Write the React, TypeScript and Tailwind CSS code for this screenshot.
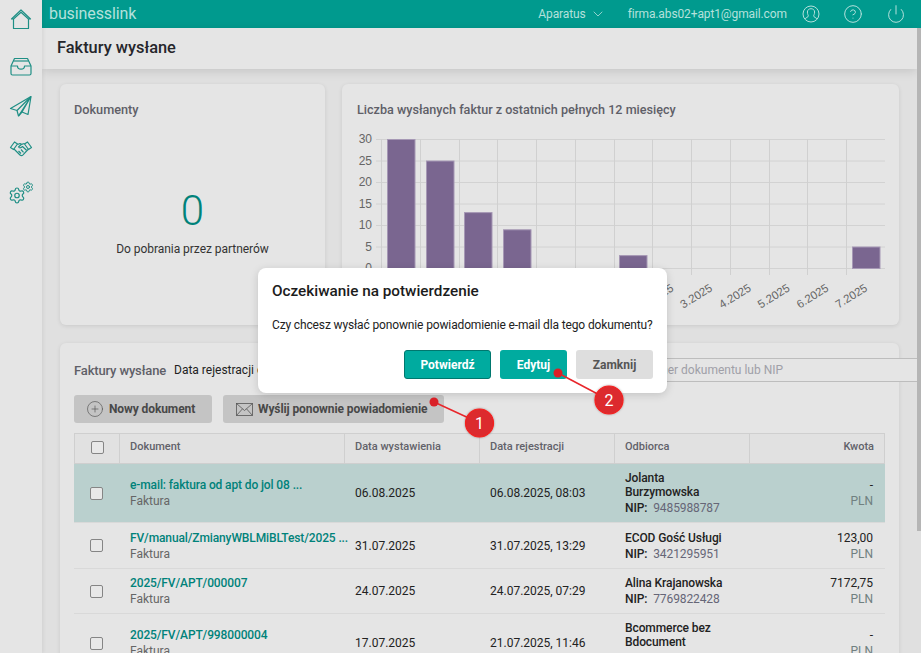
import { ChevronDown, CirclePlus, CircleQuestionMark, Power, Settings } from "lucide-react";

const months = ["7.2024", "8.2024", "9.2024", "10.2024", "11.2024", "12.2024", "1.2025", "2.2025", "3.2025", "4.2025", "5.2025", "6.2025", "7.2025"];
const values = [30, 25, 13, 9, 0, 0, 3, 0, 0, 0, 0, 0, 5];

const rows = [
  { doc: "e-mail: faktura od apt do jol 08 ...", issued: "06.08.2025", registered: "06.08.2025, 08:03", name: ["Jolanta", "Burzymowska"], nip: "9485988787", amount: "-", height: "h-[59px]", active: true },
  { doc: "FV/manual/ZmianyWBLMiBLTest/2025 ...", issued: "31.07.2025", registered: "31.07.2025, 13:29", name: ["ECOD Gość Usługi"], nip: "3421295951", amount: "123,00", height: "h-[46px]", active: false },
  { doc: "2025/FV/APT/000007", issued: "24.07.2025", registered: "24.07.2025, 07:29", name: ["Alina Krajanowska"], nip: "7769822428", amount: "7172,75", height: "h-[45px]", active: false },
  { doc: "2025/FV/APT/998000004", issued: "17.07.2025", registered: "21.07.2025, 11:46", name: ["Bcommerce bez", "Bdocument"], nip: "", amount: "-", height: "h-[59px]", active: false },
];

function Checkbox() {
  return <span className="block w-[13px] h-[13px] ml-[16px] rounded-[2px] border border-[#858585] bg-[#e8e8e8]" />;
}

function SideIcon({ className, children }: { className: string; children: React.ReactNode }) {
  return (
    <svg viewBox="0 0 24 24" fill="none" stroke="#1f8f85" strokeWidth="1.2" strokeLinejoin="round" className={`w-6 h-6 shrink-0 ${className}`}>
      {children}
    </svg>
  );
}

function Sidebar() {
  return (
    <aside className="w-[42px] shrink-0 bg-[#e5e5e5] flex flex-col items-center pt-[7px] z-10 shadow-[1px_0_4px_rgba(0,0,0,0.08)]">
      <SideIcon className="">
        <path d="M12 3 21.5 12H19.5V21.5H4.5V12H2.5Z" />
        <path d="M4.500 12 12 5.200 19.500 12" />
      </SideIcon>
      <SideIcon className="mt-[23px]">
        <path d="M5.500 4.500h13l3.500 7.500v7.500a1.500 1.500 0 0 1-1.500 1.500h-17A1.500 1.500 0 0 1 2 19.500V12z" />
        <path d="M2 12h6.500c0 2 1.300 3.200 3.500 3.200s3.500-1.200 3.500-3.200H22" />
        <path d="M4.500 7h15" />
      </SideIcon>
      <SideIcon className="mt-[16px]">
        <path d="M22 2.500 1.500 14.500 8 16.500 9.500 22 13 18l6 2.500z" />
        <path d="M22 2.500 8 16.500M22 2.500 9.500 22M22 2.500 13 18" />
      </SideIcon>
      <SideIcon className="mt-[19px]">
        <path d="M1.500 10.500 5.500 5l3 2-4 5.500zM22.500 10.500 18.500 5l-3 2 4 5.500z" />
        <path d="M8.500 7.500 11 6.500l1.500.8 3-.8M5 12l6 6c1 .8 2.200.6 3-.2l5-5.300" />
        <path d="M12.500 7.300 9.500 10c.8 1 2 1 3 .2l1-.7 4 3.700M9.500 14l2.500 2.500M12 12.500l2.500 2.800" />
      </SideIcon>
      <svg viewBox="0 0 24 24" className="w-6 h-6 shrink-0 mt-[20px] overflow-visible" fill="none">
        <Settings x="-1" y="5.500" width="18" height="18" strokeWidth={1.6} color="#1f8f85" />
        <Settings x="13" y="0" width="12" height="12" strokeWidth={2} color="#1f8f85" />
      </svg>
    </aside>
  );
}

function TopBar() {
  return (
    <header className="h-[28px] shrink-0 bg-[#009a8e] text-[#b4e1dc] flex items-center pl-[7px] text-[12px]">
      <span className="text-[16px] leading-none tracking-[-0.1px]">businesslink</span>
      <span className="ml-[402px] tracking-[-0.1px]">Aparatus</span>
      <ChevronDown size={16} strokeWidth={1.2} className="ml-[4px]" />
      <span className="ml-[22px] tracking-[-0.12px]">firma.abs02+apt1@gmail.com</span>
      <svg viewBox="0 0 18 18" fill="none" stroke="currentColor" strokeWidth="1" className="w-[18px] h-[18px] ml-[15px]">
        <circle cx="9" cy="9" r="8" />
        <path d="M6.400 11c-.2-1-1-2-1-4 0-2 1.600-3.300 3.600-3.300S12.600 5 12.600 7c0 2-.8 3-1 4 0 1 2.800 1.800 3.500 3M6.400 11c0 1-2.800 1.800-3.500 3" />
      </svg>
      <CircleQuestionMark size={20} strokeWidth={1.2} className="ml-[23px]" />
      <Power size={20} strokeWidth={1.2} className="ml-[23px]" />
    </header>
  );
}

function Chart() {
  const left = 381;
  const step = 38.77;
  const bottom = 268;
  const unit = 4.3;
  return (
    <svg viewBox="342 125 557 195" className="w-[557px] h-[195px] absolute left-0 top-[41px]">
      {[0, 5, 10, 15, 20, 25, 30].map((v) => (
        <g key={v}>
          <line x1="376" x2="885" y1={bottom - v * unit + 0.5} y2={bottom - v * unit + 0.5} stroke="#d2d2d2" />
          <text x="372" y={bottom - v * unit + 4} textAnchor="end" fontSize="12" fill="#666" fontFamily="Liberation Sans, sans-serif">
            {v}
          </text>
        </g>
      ))}
      {months.map((_, i) => (
        <line key={i} x1={Math.round(left + i * step) + 0.5} x2={Math.round(left + i * step) + 0.5} y1="139" y2="275" stroke="#d0d0d0" />
      ))}
      {values.map((v, i) =>
        v > 0 ? (
          <rect key={i} x={Math.round(left + i * step + 5.8) + 0.5} y={bottom - v * unit + 0.5} width="27.5" height={v * unit} fill="#7a6690" stroke="#a698b5" strokeWidth="1" />
        ) : null,
      )}
      {months.map((m, i) => (
        <text
          key={m}
          textAnchor="end"
          fontSize="11.5"
          fill="#666"
          fontFamily="Liberation Sans, sans-serif"
          transform={`translate(${left + i * step + 22} 290) rotate(-32)`}
        >
          {m}
        </text>
      ))}
    </svg>
  );
}

function Toolbar() {
  return (
    <div className="flex mt-[14px] gap-[11px] text-[12px] font-bold text-[#484848] tracking-[-0.1px]">
      <button className="h-[28px] w-[138px] rounded-[3px] bg-[#c4c4c4] flex items-center pl-[12px] gap-[5px]">
        <CirclePlus size={18} strokeWidth={0.9} color="#555" />
        Nowy dokument
      </button>
      <button className="h-[28px] w-[221px] rounded-[3px] bg-[#c4c4c4] flex items-center pl-[13px] gap-[5px]">
        <svg viewBox="0 0 17 13" fill="none" stroke="#555" strokeWidth="0.8" className="w-[17px] h-[13px]">
          <rect x="0.5" y="0.5" width="16" height="12" />
          <path d="M0.500 0.500 8.500 7.500 16.500 0.500M0.500 12.500 6.500 5.800M16.500 12.500 10.500 5.800" />
        </svg>
        Wyślij ponownie powiadomienie
      </button>
    </div>
  );
}

function DocumentsTable() {
  const head = "border-t border-r border-b border-[#cfcfcf] pb-[3px] font-medium";
  return (
    <table className="table-fixed w-[811px] mt-[10px] text-[12px] leading-[14px] text-[#222] border-separate border-spacing-0">
      <colgroup>
        <col className="w-[46px]" />
        <col className="w-[225px]" />
        <col className="w-[135px]" />
        <col className="w-[135px]" />
        <col className="w-[135px]" />
        <col className="w-[135px]" />
      </colgroup>
      <thead>
        <tr className="h-[31px] text-[11px] text-[#62626a] bg-[#e1e1e1]">
          <th className={`${head} border-l`}>
            <Checkbox />
          </th>
          <th className={`${head} text-left pl-[10px]`}>Dokument</th>
          <th className={`${head} text-left pl-[10px]`}>Data wystawienia</th>
          <th className={`${head} text-left pl-[10px]`}>Data rejestracji</th>
          <th className={`${head} text-left pl-[10px]`}>Odbiorca</th>
          <th className={`${head} text-right pr-[10px]`}>Kwota</th>
        </tr>
      </thead>
      <tbody>
        {rows.map((row) => (
          <tr key={row.doc} className={`${row.height} ${row.active ? "bg-[#bad0ce]" : ""}`}>
            <td className="border-b border-[#d9d9d9]">
              <Checkbox />
            </td>
            <td className="border-b border-[#d9d9d9] pl-[10px] whitespace-nowrap overflow-visible">
              <div className="font-medium text-[#00827a] leading-[16px] tracking-[-0.12px]">{row.doc}</div>
              <div className="text-[#666] leading-[16px]">Faktura</div>
            </td>
            <td className="border-b border-[#d9d9d9] pl-[10px]">{row.issued}</td>
            <td className="border-b border-[#d9d9d9] pl-[10px]">{row.registered}</td>
            <td className="border-b border-[#d9d9d9] pl-[10px] pt-[2px] font-medium tracking-[-0.1px]">
              {row.name.map((line) => (
                <div key={line}>{line}</div>
              ))}
              <div className="leading-[18px]">
                NIP: <span className="ml-[3px] font-normal text-[#667]">{row.nip}</span>
              </div>
            </td>
            <td className="border-b border-[#d9d9d9] text-right pr-[12px]">
              <div className="leading-[16px]">{row.amount}</div>
              <div className="text-[#708080] leading-[16px]">PLN</div>
            </td>
          </tr>
        ))}
      </tbody>
    </table>
  );
}

function ConfirmDialog() {
  return (
    <div className="absolute left-[258px] top-[268px] w-[409px] h-[125px] bg-white rounded-[8px] shadow-[0_2px_8px_rgba(0,0,0,0.15)] px-[14px] pt-[14px] z-20">
      <h2 className="text-[15.3px] leading-[19px] font-medium text-[#1c1c1c]">Oczekiwanie na potwierdzenie</h2>
      <p className="mt-[16px] text-[12px] leading-[16px] text-[#222] whitespace-nowrap tracking-[-0.14px]">Czy chcesz wysłać ponownie powiadomienie e-mail dla tego dokumentu?</p>
      <div className="flex justify-end gap-[9px] mt-[17px] text-[12px] font-bold">
        <button className="w-[87px] h-[29px] rounded-[3px] bg-[#00ab9f] text-white border border-[#00776e]">Potwierdź</button>
        <button className="w-[67px] h-[29px] rounded-[3px] bg-[#00ab9f] text-white">Edytuj</button>
        <button className="w-[77px] h-[29px] rounded-[3px] bg-[#dedede] text-[#555]">Zamknij</button>
      </div>
    </div>
  );
}

function Callouts() {
  const items = [
    { n: "1", dot: [434, 402], c: [479.5, 423] },
    { n: "2", dot: [558, 373], c: [609, 400] },
  ];
  return (
    <svg viewBox="0 0 921 653" className="absolute inset-0 w-[921px] h-[653px] z-30 pointer-events-none">
      <defs>
        <filter id="glow" x="-30%" y="-30%" width="160%" height="160%">
          <feDropShadow dx="0" dy="0" stdDeviation="1.2" floodColor="#000" floodOpacity="0.35" />
        </filter>
      </defs>
      {items.map((it) => (
        <g key={it.n}>
          <line x1={it.dot[0]} y1={it.dot[1]} x2={it.c[0]} y2={it.c[1]} stroke="#e8262b" strokeWidth="1.5" />
          <circle cx={it.dot[0]} cy={it.dot[1]} r="4.5" fill="#d92027" />
          <circle cx={it.c[0]} cy={it.c[1]} r="14" fill="#dc2a2e" stroke="#f5201f" strokeWidth="1.2" filter="url(#glow)" />
          <text x={it.c[0]} y={it.c[1] + 6} textAnchor="middle" fontSize="16" fill="#fff" fontFamily="Roboto, sans-serif">
            {it.n}
          </text>
        </g>
      ))}
    </svg>
  );
}

export default function App() {
  return (
    <div className="relative w-[921px] h-[653px] overflow-hidden flex bg-[#e0e0e0] font-['Roboto',sans-serif]">
      <Sidebar />
      <main className="flex-1 min-w-0 flex flex-col">
        <TopBar />
        <div className="flex-1 min-h-0 flex">
          <div className="flex-1 min-w-0 flex flex-col">
            <div className="h-[41px] shrink-0 bg-[#e5e5e5] flex items-center pl-[15px] shadow-[0_2px_10px_rgba(0,0,0,0.13)] z-[5]">
              <h1 className="text-[16.4px] font-medium text-[#26262b]">Faktury wysłane</h1>
            </div>
            <div className="px-[18px] pt-[15px]">
              <div className="flex gap-[17px]">
                <section className="w-[265px] h-[241px] shrink-0 bg-[#e5e5e5] rounded-[6px] shadow-[0_1px_4px_rgba(0,0,0,0.1)] px-[14px] pt-[18px] flex flex-col">
                  <h3 className="text-[12.7px] leading-[16px] font-medium text-[#5f5f68]">Dokumenty</h3>
                  <div className="text-center text-[42px] leading-[48px] font-light text-[#00827a] mt-[69px]">0</div>
                  <div className="text-center text-[12px] leading-[16px] text-[#333] mt-[6px] tracking-[-0.05px]">Do pobrania przez partnerów</div>
                </section>
                <section className="relative w-[557px] h-[241px] shrink-0 bg-[#e5e5e5] rounded-[6px] shadow-[0_1px_4px_rgba(0,0,0,0.1)] px-[15px] pt-[18px]">
                  <h3 className="text-[12.6px] leading-[16px] font-medium text-[#5f5f68]">Liczba wysłanych faktur z ostatnich pełnych 12 miesięcy</h3>
                  <Chart />
                </section>
              </div>
              <section className="w-[839px] h-[400px] mt-[18px] bg-[#e5e5e5] rounded-[6px] shadow-[0_1px_4px_rgba(0,0,0,0.1)] px-[14px] pt-[15px]">
                <div className="flex items-center h-[23px]">
                  <span className="text-[13px] font-medium text-[#5f5f68] w-[100px] tracking-[-0.15px] pt-[2px]">Faktury wysłane</span>
                  <span className="text-[12px] text-[#222]">Data rejestracji od</span>
                  <div className="ml-auto -mr-[32px] w-[282px] h-[24px] flex items-center pl-[7px] border-y border-[#bdbdbd] bg-[#e5e5e5] text-[12px] text-[#a0a0a8]">Numer dokumentu lub NIP</div>
                </div>
                <Toolbar />
                <DocumentsTable />
              </section>
            </div>
          </div>
          <div className="w-[4px] shrink-0 z-10">
            <div className="h-[503px] bg-[#b5b5b5]" />
          </div>
        </div>
      </main>
      <ConfirmDialog />
      <Callouts />
    </div>
  );
}
